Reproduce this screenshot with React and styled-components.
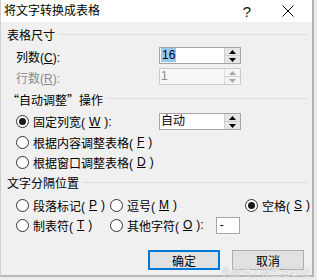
import React from 'react';
import styled, { createGlobalStyle } from 'styled-components';

const GlobalStyle = createGlobalStyle`
  html, body {
    margin: 0;
    padding: 0;
    background: #e9e9e9;
  }
  body {
    font-family: "Liberation Sans", "Noto Sans CJK SC", sans-serif;
    font-size: 12px;
    color: #000;
  }
`;

export default function App() {
  return (
    <Screen>
      <GlobalStyle />
      <Dialog>
        <TitleBar>
          <Title>将文字转换成表格</Title>
          <TitleButtons>
            <Help>?</Help>
            <Close>
              <svg width="12" height="12" viewBox="0 0 12 12">
                <path d="M0.5 0.5 L11.5 11.5 M11.5 0.5 L0.5 11.5" stroke="#000" strokeWidth="1" />
              </svg>
            </Close>
          </TitleButtons>
        </TitleBar>

        <Body>
          <GroupHeader top={7}>
            <span>表格尺寸</span>
            <Rule />
          </GroupHeader>
          <FieldRow top={2}>
            <FieldLabel>列数(<u>C</u>):</FieldLabel>
            <SpinBox value="16" selected />
          </FieldRow>
          <FieldRow>
            <FieldLabel disabled>行数(<u>R</u>):</FieldLabel>
            <SpinBox value="1" disabled />
          </FieldRow>

          <GroupHeader top={6}>
            <CjkText>“自动调整”操作</CjkText>
            <Rule />
          </GroupHeader>
          <FieldRow top={4}>
            <RadioLabel width={143}>
              <Radio checked />
              固定列宽(<u>W</u>):
            </RadioLabel>
            <SpinBox value="自动" />
          </FieldRow>
          <OptionRow>
            <RadioLabel>
              <Radio />
              根据内容调整表格(<u>F</u>)
            </RadioLabel>
          </OptionRow>
          <OptionRow>
            <RadioLabel>
              <Radio />
              根据窗口调整表格(<u>D</u>)
            </RadioLabel>
          </OptionRow>

          <GroupHeader top={5}>
            <span>文字分隔位置</span>
            <Rule />
          </GroupHeader>
          <SeparatorGrid>
            <RadioLabel>
              <Radio />
              段落标记(<u>P</u>)
            </RadioLabel>
            <RadioLabel>
              <Radio />
              逗号(<u>M</u>)
            </RadioLabel>
            <RadioLabel>
              <Radio checked />
              空格(<u>S</u>)
            </RadioLabel>
            <RadioLabel>
              <Radio />
              制表符(<u>T</u>)
            </RadioLabel>
            <RadioLabel>
              <Radio />
              其他字符(<u>O</u>):
              <OtherInput>-</OtherInput>
            </RadioLabel>
          </SeparatorGrid>

          <ButtonBar>
            <Button primary>确定</Button>
            <Button>取消</Button>
          </ButtonBar>
        </Body>
        <Watermark>头条号 / 微生活日记</Watermark>
      </Dialog>
    </Screen>
  );
}

function SpinBox({ value, selected, disabled }) {
  return (
    <Spin disabled={disabled}>
      <SpinValue disabled={disabled}>
        {selected ? <Selection>{value}</Selection> : value}
      </SpinValue>
      <SpinButtons disabled={disabled}>
        <SpinArrow>
          <svg width="7" height="4" viewBox="0 0 7 4">
            <path d="M3.5 0 L7 4 L0 4 Z" fill={disabled ? '#a8a8a8' : '#000'} />
          </svg>
        </SpinArrow>
        <SpinArrow down>
          <svg width="7" height="4" viewBox="0 0 7 4">
            <path d="M0 0 L7 0 L3.5 4 Z" fill={disabled ? '#a8a8a8' : '#000'} />
          </svg>
        </SpinArrow>
      </SpinButtons>
    </Spin>
  );
}

const Screen = styled.div`
  width: 317px;
  height: 280px;
  overflow: hidden;
  background: #ececec;
`;

const Dialog = styled.div`
  position: relative;
  box-sizing: border-box;
  width: 314px;
  height: 277px;
  background: #f0f0f0;
  border-left: 1px solid #cfcfcf;
  border-right: 2px solid #b2b2b2;
  border-bottom: 2px solid #b8b8b8;
  display: flex;
  flex-direction: column;
`;

const TitleBar = styled.div`
  height: 22px;
  background: #fff;
  display: flex;
  align-items: center;
  justify-content: space-between;
  padding-left: 3px;
`;

const Title = styled.div`
  font-size: 12px;
  line-height: 22px;
`;

const TitleButtons = styled.div`
  display: flex;
  align-items: center;
  height: 22px;
`;

const Help = styled.div`
  width: 20px;
  text-align: center;
  font-size: 15px;
  margin-right: 17px;
  color: #111;
`;

const Close = styled.div`
  width: 28px;
  display: flex;
  justify-content: center;
  margin-right: 10px;
`;

const Body = styled.div`
  flex: 1;
  display: flex;
  flex-direction: column;
  padding: 0 5px 0 6px;
`;

const CjkText = styled.span`
  font-family: "Noto Sans CJK SC", sans-serif;
`;

const GroupHeader = styled.div`
  display: flex;
  align-items: center;
  height: 14px;
  line-height: 14px;
  margin-top: ${p => p.top || 0}px;
  white-space: nowrap;
`;

const Rule = styled.div`
  flex: 1;
  height: 1px;
  background: #dcdcdc;
  margin: 0 0 3px 3px;
`;

const FieldRow = styled.div`
  display: flex;
  align-items: center;
  height: 21px;
  margin-top: ${p => p.top || 0}px;
  padding-left: 9px;
`;

const OptionRow = styled.div`
  display: flex;
  align-items: center;
  height: 20px;
  padding-left: 9px;
`;

const FieldLabel = styled.div`
  width: 143px;
  color: ${p => (p.disabled ? '#8c8c8c' : '#000')};
  padding-top: 2px;
  white-space: nowrap;
`;

const RadioLabel = styled.label`
  display: flex;
  align-items: center;
  gap: 4px;
  width: ${p => (p.width ? `${p.width}px` : 'auto')};
  white-space: nowrap;
`;

const RadioCircle = styled.span`
  box-sizing: border-box;
  width: 13px;
  height: 13px;
  border-radius: 50%;
  border: 1px solid #333;
  background: #fff;
  display: inline-flex;
  align-items: center;
  justify-content: center;
  flex-shrink: 0;
`;

const RadioDot = styled.span`
  width: 7px;
  height: 7px;
  border-radius: 50%;
  background: #1a1a1a;
`;

function Radio({ checked }) {
  return <RadioCircle>{checked && <RadioDot />}</RadioCircle>;
}

const Spin = styled.div`
  box-sizing: border-box;
  width: 82px;
  height: 17px;
  display: flex;
  border: 1px solid ${p => (p.disabled ? '#cccccc' : '#a5a5a5')};
  background: ${p => (p.disabled ? '#f7f7f7' : '#fff')};
`;

const SpinValue = styled.div`
  flex: 1;
  line-height: 15px;
  padding-left: 1px;
  font-size: 12px;
  color: ${p => (p.disabled ? '#8c8c8c' : '#000')};
`;

const Selection = styled.span`
  background: #99c9ef;
  padding: 0 1px;
`;

const SpinButtons = styled.div`
  width: 15px;
  display: flex;
  flex-direction: column;
  border-left: 1px solid ${p => (p.disabled ? '#dddddd' : '#cfcfcf')};
  background: ${p => (p.disabled ? '#f4f4f4' : '#e6e6e6')};
`;

const SpinArrow = styled.div`
  flex: 1;
  display: flex;
  align-items: center;
  justify-content: center;
  border-top: ${p => (p.down ? '1px solid #cfcfcf' : 'none')};
`;

const SeparatorGrid = styled.div`
  display: grid;
  grid-template-columns: 94px 135px auto;
  grid-auto-rows: 20px;
  align-items: center;
  margin-top: 4px;
  padding-left: 9px;
`;

const OtherInput = styled.div`
  box-sizing: border-box;
  width: 24px;
  height: 17px;
  margin-left: 8px;
  border: 1px solid #a5a5a5;
  background: #fff;
  line-height: 15px;
  padding-left: 3px;
`;

const ButtonBar = styled.div`
  display: flex;
  justify-content: flex-end;
  gap: 12px;
  margin-top: 15px;
  padding-right: 3px;
`;

const Button = styled.div`
  box-sizing: border-box;
  width: 72px;
  height: 20px;
  display: flex;
  align-items: center;
  justify-content: center;
  background: #e1e1e1;
  border: ${p => (p.primary ? '2px solid #0078d7' : '1px solid #adadad')};
`;

const Watermark = styled.div`
  position: absolute;
  right: 2px;
  bottom: -3px;
  font-size: 10px;
  line-height: 11px;
  color: rgba(255, 255, 255, 0.85);
  text-shadow: 0 0 1px rgba(90, 90, 90, 0.6);
  white-space: nowrap;
  pointer-events: none;
`;
